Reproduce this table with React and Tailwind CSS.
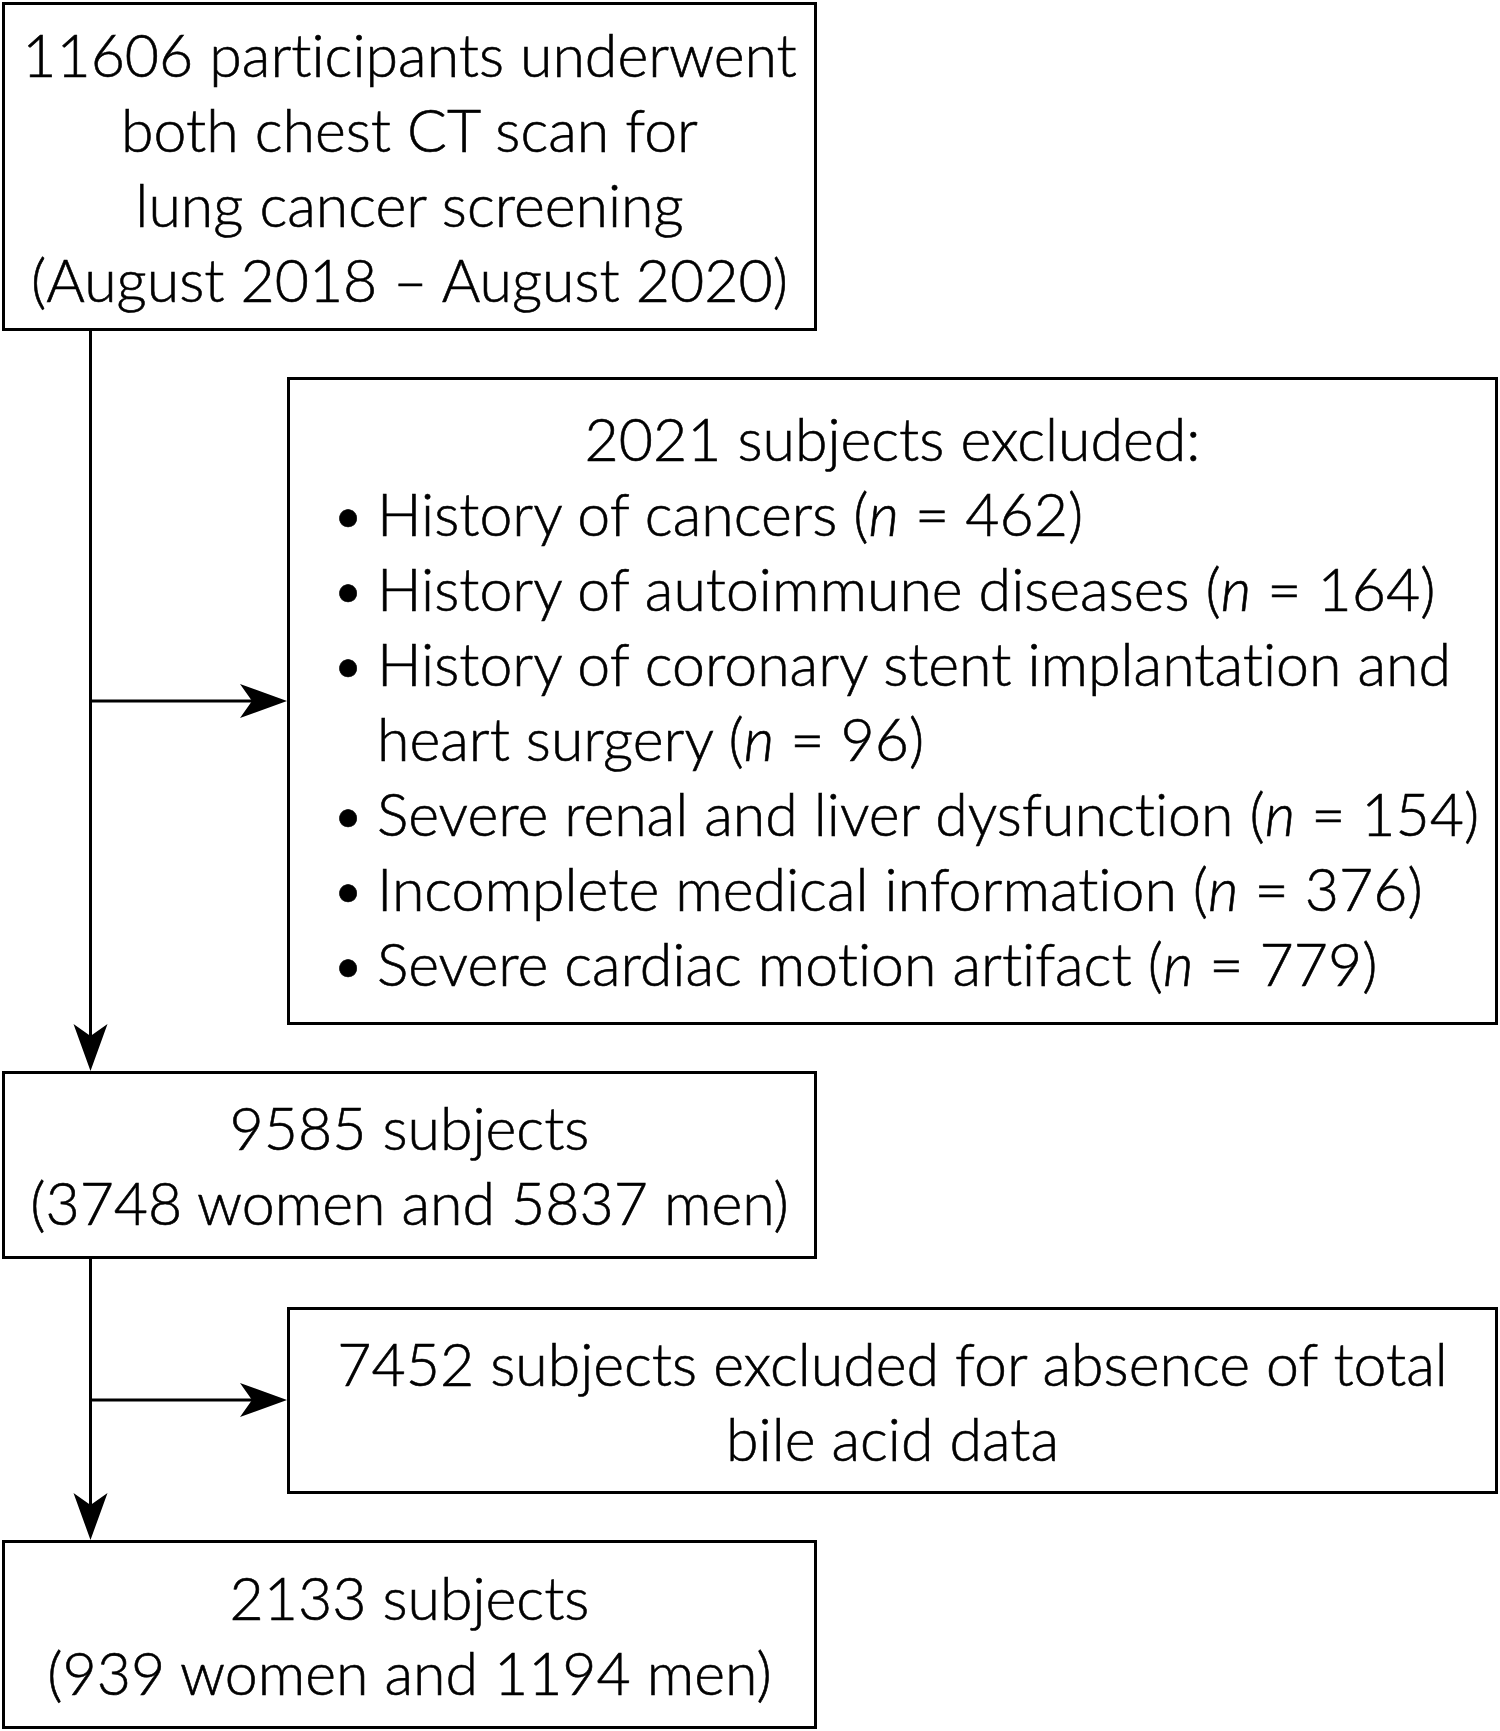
import React from "react";

const Arrow = ({ x, y, dir }) => {
  // stealth arrowhead, tip at (x, y)
  if (dir === "down") {
    return (
      <path
        d={`M${x} ${y} L${x - 17} ${y - 47} L${x} ${y - 35} L${x + 17} ${y - 47} Z`}
        fill="black"
      />
    );
  }
  return (
    <path
      d={`M${x} ${y} L${x - 47} ${y - 17} L${x - 35} ${y} L${x - 47} ${y + 17} Z`}
      fill="black"
    />
  );
};

const Connector = ({ height, branchY }) => (
  <svg width="287" height={height} className="block shrink-0">
    <line x1="90.5" y1="0" x2="90.5" y2={height - 20} stroke="black" strokeWidth="3" />
    <line x1="90.5" y1={branchY} x2="260" y2={branchY} stroke="black" strokeWidth="3" />
    <Arrow x={90.5} y={height} dir="down" />
    <Arrow x={287} y={branchY} dir="right" />
  </svg>
);

const N = () => <span className="italic">n</span>;

const items = [
  [<>History of cancers (<N /> = 462)</>],
  [<>History of autoimmune diseases (<N /> = 164)</>],
  [<>History of coronary stent implantation and</>, <>heart surgery (<N /> = 96)</>],
  [<>Severe renal and liver dysfunction (<N /> = 154)</>],
  [<>Incomplete medical information (<N /> = 376)</>],
  [<>Severe cardiac motion artifact (<N /> = 779)</>],
];

export default function App() {
  return (
    <div className="w-[1500px] h-[1731px] bg-white text-black font-['Lato',sans-serif] font-light text-[59px] leading-[75px] whitespace-nowrap overflow-hidden [font-variant-ligatures:none] [-webkit-text-stroke:0.6px_black]">
      <div className="mt-[2px] ml-[2px] w-[815px] h-[329px] border-[3px] border-black flex flex-col items-center justify-center text-center">
        <div>11606 participants underwent</div>
        <div>both chest CT scan for</div>
        <div>lung cancer screening</div>
        <div>(August 2018 – August 2020)</div>
      </div>

      <div className="flex h-[740px]">
        <Connector height={740} branchY={370} />
        <div className="mt-[46px] w-[1211px] h-[648px] border-[3px] border-black flex flex-col justify-center">
          <div className="text-center">2021 subjects excluded:</div>
          <div className="pl-[41px]">
            {items.map((lines, i) => (
              <div key={i}>
                {lines.map((line, j) => (
                  <div key={j} className="flex">
                    <span className="w-[46px] shrink-0">{j === 0 ? "•" : ""}</span>
                    <span>{line}</span>
                  </div>
                ))}
              </div>
            ))}
          </div>
        </div>
      </div>

      <div className="ml-[2px] w-[815px] h-[188px] border-[3px] border-black flex flex-col items-center justify-center text-center">
        <div>9585 subjects</div>
        <div>(3748 women and 5837 men)</div>
      </div>

      <div className="flex h-[281px]">
        <Connector height={281} branchY={141} />
        <div className="mt-[48px] w-[1211px] h-[187px] border-[3px] border-black flex flex-col items-center justify-center text-center">
          <div>7452 subjects excluded for absence of total</div>
          <div>bile acid data</div>
        </div>
      </div>

      <div className="ml-[2px] w-[815px] h-[189px] border-[3px] border-black flex flex-col items-center justify-center text-center">
        <div>2133 subjects</div>
        <div>(939 women and 1194 men)</div>
      </div>
    </div>
  );
}
